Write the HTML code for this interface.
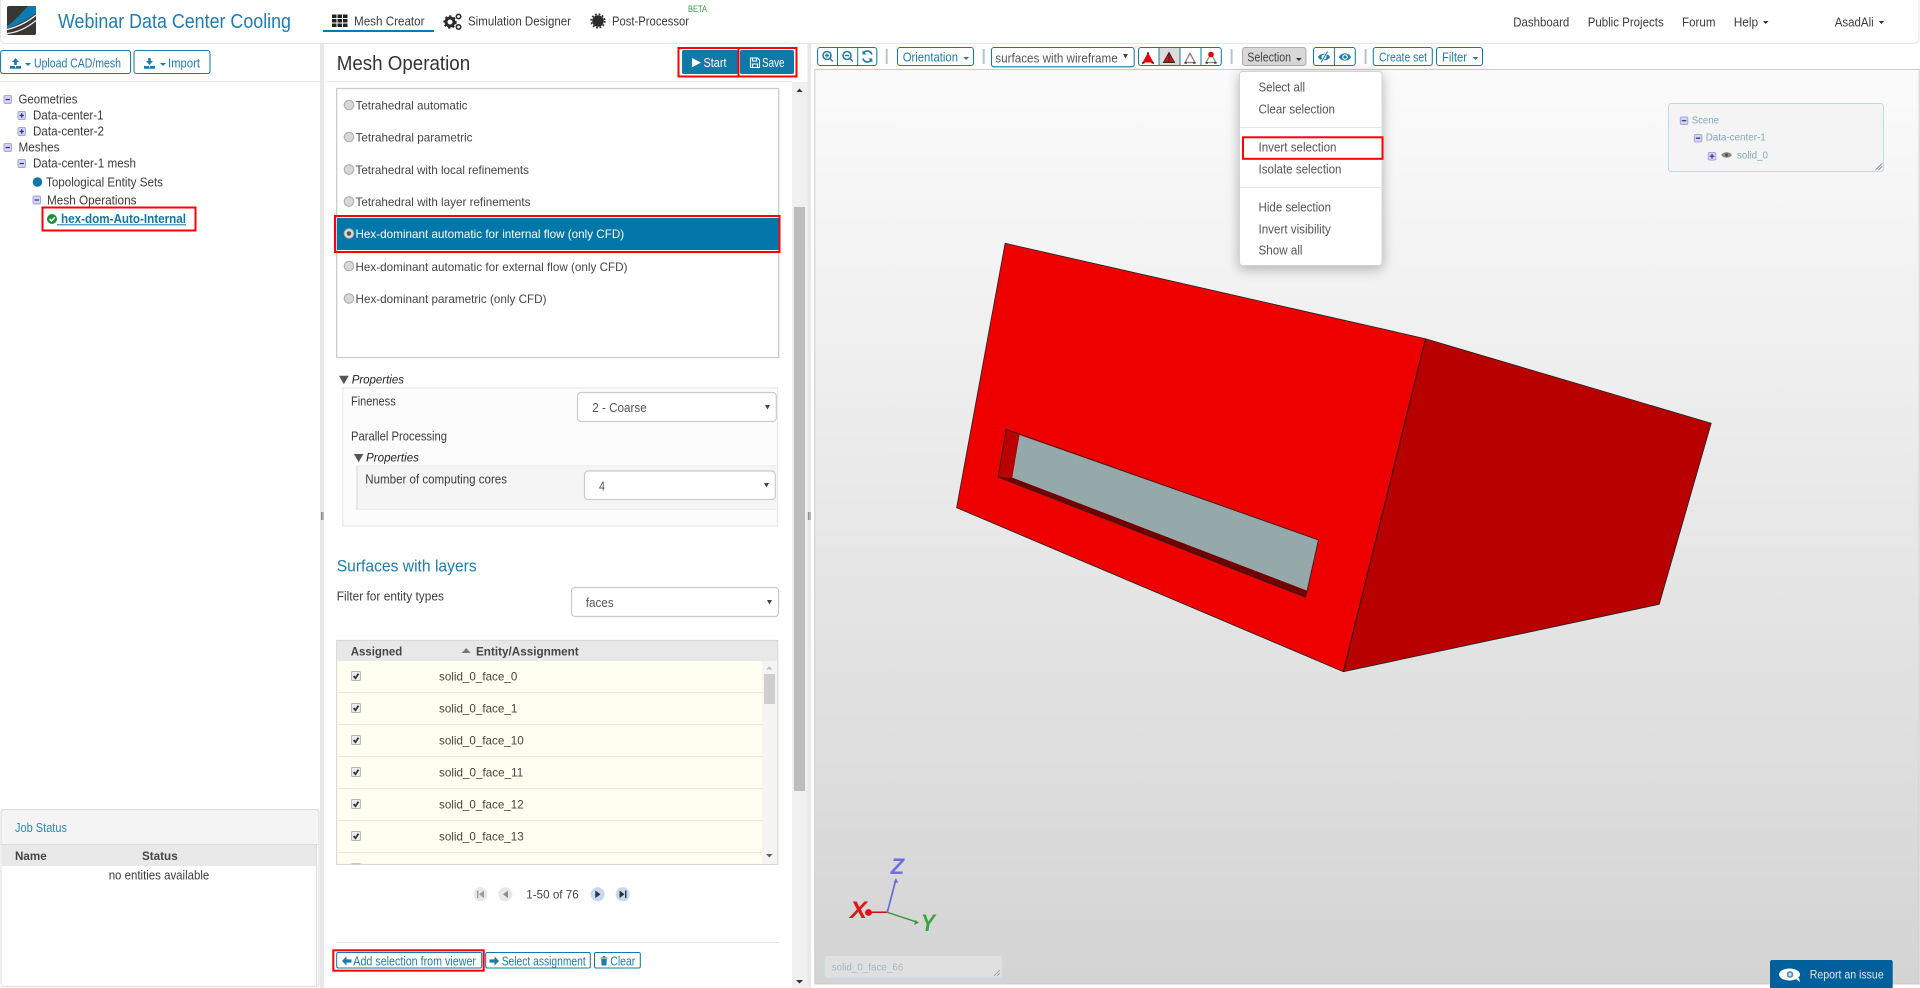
<!DOCTYPE html>
<html lang="en">
<head>
<meta charset="utf-8">
<title>Webinar Data Center Cooling - Mesh Creator</title>
<style>
html,body{margin:0;padding:0;background:#fff;width:1920px;height:988px;overflow:hidden}
svg{display:block}
text{font-family:"Liberation Sans",sans-serif;font-size:13px;fill:#3c3c3c;white-space:pre}
.a{font-size:12px;fill:#444}
.b{font-size:12px;font-weight:bold;fill:#454545}
.lk{fill:#1c7dad}
.m{font-size:12.5px;fill:#555}
.sm{font-size:10px;fill:#7fa9bc}
.btn{fill:#fff;stroke:#1479a8;stroke-width:1.05}
.ln{stroke:#1479a8;stroke-width:1}
.sep{stroke:#b4c4cf;stroke-width:2}
.ib{fill:#1c7dad}
.tb{fill:#d4d4f0;stroke:#a6a6d6;stroke-width:1}
.tm{stroke:#2a2a9a;stroke-width:1.2;fill:none}
.rad{fill:#d8d8d8;stroke:#aaa;stroke-width:1}
.sel{fill:#fff;stroke:#ccc;stroke-width:1.2}
.red{fill:none;stroke:#f00;stroke-width:2}
.ck{fill:#ececec;stroke:#b5b5b5;stroke-width:1}
.cm{fill:none;stroke:#333;stroke-width:1.8}
.rl{stroke:#e6e6e6;stroke-width:1}
</style>
</head>
<body>
<svg xmlns="http://www.w3.org/2000/svg" width="1920" height="988" viewBox="0 0 1920 988">
<defs>
<linearGradient id="vg" x1="0" y1="0" x2="0" y2="1"><stop offset="0" stop-color="#fbfbfb"/><stop offset="1" stop-color="#d4d4d4"/></linearGradient>
</defs>

<!-- header -->
<rect x="0.5" y="-6" width="1918.5" height="49.5" rx="5" fill="#fff" stroke="#e6e6e6"/>
<!-- logo -->
<rect x="7" y="6" width="29" height="29" rx="2" fill="#3a3633"/>
<path d="M36 6H28C22 12 15 21 7 26V28.5C18 25 29 19 36 13Z" fill="#0d7ab0"/>
<path d="M7 29.5C18 27 29 21 36 15" stroke="#fff" stroke-width="1.2" fill="none"/>
<path d="M7 33.5C18 32.5 28 27 36 20.5" stroke="#e8e8e8" stroke-width="1.3" fill="none"/>
<text x="58" y="28" textLength="233" lengthAdjust="spacingAndGlyphs" style="font-size:20.5px;fill:#1f7cb0">Webinar Data Center Cooling</text>

<!-- nav -->
<g fill="#222">
<rect x="332" y="14.5" width="4.5" height="3.5"/><rect x="337.5" y="14.5" width="4.5" height="3.5"/><rect x="343" y="14.5" width="4.5" height="3.5"/>
<rect x="332" y="19" width="4.5" height="3.5"/><rect x="337.5" y="19" width="4.5" height="3.5"/><rect x="343" y="19" width="4.5" height="3.5"/>
<rect x="332" y="23.5" width="4.5" height="3.5"/><rect x="337.5" y="23.5" width="4.5" height="3.5"/><rect x="343" y="23.5" width="4.5" height="3.5"/>
</g>
<text x="354" y="25.5" textLength="70.5" lengthAdjust="spacingAndGlyphs">Mesh Creator</text>
<rect x="323" y="30" width="111" height="2" fill="#1479a8"/>
<circle cx="450" cy="22" r="4" fill="none" stroke="#2b2b2b" stroke-width="3"/>
<circle cx="450" cy="22" r="5.8" fill="none" stroke="#2b2b2b" stroke-width="1.8" stroke-dasharray="2.2 2.2"/>
<circle cx="458.5" cy="16.5" r="2.2" fill="none" stroke="#2b2b2b" stroke-width="1.6"/>
<circle cx="458.5" cy="27" r="2.2" fill="none" stroke="#2b2b2b" stroke-width="1.6"/>
<text x="468" y="25.5" textLength="103" lengthAdjust="spacingAndGlyphs">Simulation Designer</text>
<circle cx="598" cy="21" r="5.8" fill="#2b2b2b"/>
<circle cx="598" cy="21" r="6.8" fill="none" stroke="#2b2b2b" stroke-width="1.6" stroke-dasharray="1.8 1.8"/>
<text x="612" y="25.5" textLength="77" lengthAdjust="spacingAndGlyphs">Post-Processor</text>
<text x="688" y="12" textLength="19" lengthAdjust="spacingAndGlyphs" style="font-size:9px;fill:#3f9d3f">BETA</text>

<text x="1513.3" y="26.5" textLength="56" lengthAdjust="spacingAndGlyphs">Dashboard</text>
<text x="1587.7" y="26.5" textLength="76" lengthAdjust="spacingAndGlyphs">Public Projects</text>
<text x="1682" y="26.5" textLength="33.5" lengthAdjust="spacingAndGlyphs">Forum</text>
<text x="1733.7" y="26.5" textLength="24.5" lengthAdjust="spacingAndGlyphs">Help</text>
<path d="M1763 21h5.5l-2.75 3z" fill="#333"/>
<text x="1834.7" y="26.5" textLength="39" lengthAdjust="spacingAndGlyphs">AsadAli</text>
<path d="M1878.7 21h5.5l-2.75 3z" fill="#333"/>

<!-- left panel -->
<rect x="320" y="44" width="4" height="944" fill="#e8e8e8"/>
<path d="M321.5 512v8M323 512v8" stroke="#666" stroke-width=".8"/>
<rect x="0.6" y="50.5" width="130" height="23" rx="2.5" class="btn"/>
<path d="M15.5 58l-3.5 4h2.2v3h2.6v-3H19zM10 66h5v1.5h1V66h5v2.8H10z" class="ib"/>
<path d="M25 63h6l-3 3z" class="ib"/>
<text x="34" y="67.5" textLength="87" lengthAdjust="spacingAndGlyphs" class="lk">Upload CAD/mesh</text>
<rect x="134" y="50.5" width="76" height="23" rx="2.5" class="btn"/>
<path d="M148.2 58h2.6v3H153l-3.5 4-3.5-4h2.2zM144 66h5v1.5h1V66h5v2.8h-11z" class="ib"/>
<path d="M160 63h6l-3 3z" class="ib"/>
<text x="168" y="67.5" textLength="32" lengthAdjust="spacingAndGlyphs" class="lk">Import</text>
<rect x="0" y="81" width="320" height="1" fill="#e6e6e6"/>

<!-- tree -->
<rect x="4" y="95.5" width="7.5" height="8" rx="1.5" class="tb"/><path d="M5.6 99.5h4.3" class="tm"/>
<text x="18.5" y="103.5" textLength="59" lengthAdjust="spacingAndGlyphs">Geometries</text>
<rect x="18" y="111.5" width="7.5" height="8" rx="1.5" class="tb"/><path d="M19.6 115.5h4.3M21.75 113.3v4.4" class="tm"/>
<text x="33" y="119.5" textLength="70.5" lengthAdjust="spacingAndGlyphs">Data-center-1</text>
<rect x="18" y="127.5" width="7.5" height="8" rx="1.5" class="tb"/><path d="M19.6 131.5h4.3M21.75 129.3v4.4" class="tm"/>
<text x="33" y="135.5" textLength="71" lengthAdjust="spacingAndGlyphs">Data-center-2</text>
<rect x="4" y="143.5" width="7.5" height="8" rx="1.5" class="tb"/><path d="M5.6 147.5h4.3" class="tm"/>
<text x="18.5" y="151.5" textLength="41" lengthAdjust="spacingAndGlyphs">Meshes</text>
<rect x="18" y="159.5" width="7.5" height="8" rx="1.5" class="tb"/><path d="M19.6 163.5h4.3" class="tm"/>
<text x="33" y="167.5" textLength="103" lengthAdjust="spacingAndGlyphs">Data-center-1 mesh</text>
<circle cx="37.5" cy="182" r="4.8" fill="#0f78a8"/>
<text x="46" y="186.5" textLength="117" lengthAdjust="spacingAndGlyphs">Topological Entity Sets</text>
<rect x="33" y="196" width="7.5" height="8" rx="1.5" class="tb"/><path d="M34.6 200h4.3" class="tm"/>
<text x="47" y="204.5" textLength="89.5" lengthAdjust="spacingAndGlyphs">Mesh Operations</text>
<circle cx="52" cy="219" r="5" fill="#1f8f3c"/>
<path d="M49.5 219l2 2 3.2-3.6" stroke="#fff" stroke-width="1.6" fill="none"/>
<text x="61" y="223" textLength="125" lengthAdjust="spacingAndGlyphs" style="font-size:13px;font-weight:bold;fill:#1077a8">hex-dom-Auto-Internal</text>
<rect x="57" y="224.3" width="129" height="1" fill="#1077a8"/>
<rect x="42.5" y="207.5" width="153" height="23" class="red"/>

<!-- job status -->
<rect x="1" y="809.5" width="318" height="177" rx="3" fill="#fff"/>
<path d="M1.5 844V812a3 3 0 0 1 3-3H316a3 3 0 0 1 3 3V844Z" fill="#f4f4f4"/>
<rect x="1" y="809.5" width="318" height="177" rx="3" fill="none" stroke="#ddd"/>
<rect x="1" y="844" width="318" height="1" fill="#ddd"/>
<text x="15" y="832" textLength="52" lengthAdjust="spacingAndGlyphs" style="font-size:12.5px;fill:#2a8abb">Job Status</text>
<rect x="2" y="845" width="314" height="21" fill="#e9e9e9"/>
<rect x="316" y="845" width="1" height="141" fill="#ddd"/>
<text x="15" y="860" textLength="31.7" lengthAdjust="spacingAndGlyphs" class="b">Name</text>
<text x="142" y="860" textLength="35.7" lengthAdjust="spacingAndGlyphs" class="b">Status</text>
<text x="108.7" y="879.5" textLength="100.6" lengthAdjust="spacingAndGlyphs" style="font-size:12.5px">no entities available</text>

<!-- middle panel -->
<text x="336.7" y="70" textLength="133.5" lengthAdjust="spacingAndGlyphs" style="font-size:20.5px;fill:#333">Mesh Operation</text>
<rect x="682" y="50" width="56" height="24" rx="2" fill="#1079a8"/>
<path d="M692 58l9 4.6-9 4.6z" fill="#fff"/>
<text x="703.5" y="67" textLength="23" lengthAdjust="spacingAndGlyphs" style="fill:#fff">Start</text>
<rect x="740" y="50" width="54" height="24" rx="2" fill="#1079a8"/>
<path d="M750.5 58h7l2 2v7.5h-9zM752.5 58v3h4v-3M752.5 67.5v-3.5h5v3.5" fill="none" stroke="#fff" stroke-width="1.1"/>
<text x="762" y="67" textLength="22.5" lengthAdjust="spacingAndGlyphs" style="fill:#fff">Save</text>
<rect x="678.5" y="48" width="60" height="28.5" class="red"/>
<rect x="738.5" y="48" width="58" height="28.5" class="red"/>
<rect x="327" y="81" width="465" height="1" fill="#e6e6e6"/>

<rect x="336.7" y="88.5" width="442" height="269" fill="#fff" stroke="#ccc" stroke-width="1.3"/>
<circle cx="349" cy="105" r="4.8" class="rad"/><text x="355.5" y="109.5" textLength="112" lengthAdjust="spacingAndGlyphs" class="a">Tetrahedral automatic</text>
<circle cx="349" cy="137" r="4.8" class="rad"/><text x="355.5" y="141.5" textLength="117" lengthAdjust="spacingAndGlyphs" class="a">Tetrahedral parametric</text>
<circle cx="349" cy="169.5" r="4.8" class="rad"/><text x="355.5" y="174" textLength="173.5" lengthAdjust="spacingAndGlyphs" class="a">Tetrahedral with local refinements</text>
<circle cx="349" cy="201.5" r="4.8" class="rad"/><text x="355.5" y="206" textLength="175" lengthAdjust="spacingAndGlyphs" class="a">Tetrahedral with layer refinements</text>
<rect x="337" y="218" width="441.5" height="32" fill="#0077a8"/>
<circle cx="349" cy="233.5" r="4.8" fill="#ddd" stroke="#aaa"/><circle cx="349" cy="233.5" r="2.3" fill="#555"/>
<text x="355.5" y="238" textLength="268.7" lengthAdjust="spacingAndGlyphs" class="a" style="fill:#fff">Hex-dominant automatic for internal flow (only CFD)</text>
<rect x="335" y="216" width="444.5" height="36" class="red"/>
<circle cx="349" cy="266" r="4.8" class="rad"/><text x="355.5" y="271" textLength="272" lengthAdjust="spacingAndGlyphs" class="a">Hex-dominant automatic for external flow (only CFD)</text>
<circle cx="349" cy="298.5" r="4.8" class="rad"/><text x="355.5" y="303" textLength="191" lengthAdjust="spacingAndGlyphs" class="a">Hex-dominant parametric (only CFD)</text>

<path d="M339 375.7h9.7l-4.85 8.6z" fill="#555"/>
<text x="351.7" y="383.5" textLength="52.3" lengthAdjust="spacingAndGlyphs" style="font-size:12px;font-style:italic;fill:#222">Properties</text>
<rect x="342.8" y="388" width="434.7" height="138" fill="#fcfcfc" stroke="#eaeaea" stroke-width="1.2"/>
<text x="351" y="405.5" textLength="44.7" lengthAdjust="spacingAndGlyphs">Fineness</text>
<rect x="577.5" y="392.5" width="198.8" height="29" rx="3.5" class="sel"/>
<text x="592.3" y="411.8" textLength="54.4" lengthAdjust="spacingAndGlyphs" class="m">2 - Coarse</text>
<path d="M765 405h5l-2.5 4.5z" fill="#444"/>
<text x="351" y="440.5" textLength="96" lengthAdjust="spacingAndGlyphs">Parallel Processing</text>
<path d="M354 454h9.3l-4.65 8.3z" fill="#555"/>
<text x="366" y="461.5" textLength="53" lengthAdjust="spacingAndGlyphs" style="font-size:12px;font-style:italic;fill:#222">Properties</text>
<rect x="356" y="465.5" width="420.7" height="44" fill="#f5f5f5"/>
<rect x="356" y="465.5" width="2" height="44" fill="#e6e6e6"/>
<rect x="356" y="465.3" width="420.7" height="1" fill="#ececec"/>
<rect x="356" y="509" width="420.7" height="1" fill="#ececec"/>
<text x="365.3" y="483.5" textLength="141.7" lengthAdjust="spacingAndGlyphs">Number of computing cores</text>
<rect x="584.5" y="471" width="190.8" height="28.5" rx="3.5" class="sel"/>
<text x="599" y="490.5" textLength="6" lengthAdjust="spacingAndGlyphs" class="m">4</text>
<path d="M764 483h5l-2.5 4.5z" fill="#444"/>

<text x="336.7" y="571.5" textLength="140" lengthAdjust="spacingAndGlyphs" style="font-size:16.5px;fill:#1c7dad">Surfaces with layers</text>
<text x="336.7" y="600.5" textLength="107.3" lengthAdjust="spacingAndGlyphs">Filter for entity types</text>
<rect x="571.5" y="587.5" width="207" height="29" rx="3.5" class="sel"/>
<text x="585.7" y="606.8" textLength="28" lengthAdjust="spacingAndGlyphs" class="m">faces</text>
<path d="M767 600h5l-2.5 4.5z" fill="#444"/>

<!-- table -->
<rect x="336.7" y="640.5" width="441" height="224" fill="#fffff0" stroke="#d8d8d8" stroke-width="1.2"/>
<rect x="337.3" y="641" width="440" height="20" fill="#e8e8e8"/>
<text x="350.7" y="655.5" textLength="51.6" lengthAdjust="spacingAndGlyphs" class="b">Assigned</text>
<path d="M461.7 653l4.5-5 4.5 5z" fill="#777"/>
<text x="476" y="655.5" textLength="102.7" lengthAdjust="spacingAndGlyphs" class="b">Entity/Assignment</text>
<rect x="762" y="661" width="15" height="203" fill="#f4f4f2"/>
<path d="M766 669.5l3.3-3.5 3.3 3.5z" fill="#c4c4c4"/>
<rect x="764" y="674" width="11" height="30" fill="#cfcfcb"/>
<path d="M766 854h6.6l-3.3 3.5z" fill="#666"/>
<path class="rl" d="M337.3 692.5H762M337.3 724.5H762M337.3 756.5H762M337.3 788.5H762M337.3 820.5H762M337.3 852.5H762"/>
<g>
<rect x="351.5" y="671.5" width="9" height="9" rx="1.5" class="ck"/><path d="M353.5 676l2 2.2 3-4.6" class="cm"/>
<text x="439" y="680.5" textLength="78.3" lengthAdjust="spacingAndGlyphs" style="font-size:12px;fill:#444">solid_0_face_0</text>
<rect x="351.5" y="703.5" width="9" height="9" rx="1.5" class="ck"/><path d="M353.5 708l2 2.2 3-4.6" class="cm"/>
<text x="439" y="712.5" textLength="78.3" lengthAdjust="spacingAndGlyphs" style="font-size:12px;fill:#444">solid_0_face_1</text>
<rect x="351.5" y="735.5" width="9" height="9" rx="1.5" class="ck"/><path d="M353.5 740l2 2.2 3-4.6" class="cm"/>
<text x="439" y="744.5" textLength="84.7" lengthAdjust="spacingAndGlyphs" style="font-size:12px;fill:#444">solid_0_face_10</text>
<rect x="351.5" y="767.5" width="9" height="9" rx="1.5" class="ck"/><path d="M353.5 772l2 2.2 3-4.6" class="cm"/>
<text x="439" y="776.5" textLength="84.3" lengthAdjust="spacingAndGlyphs" style="font-size:12px;fill:#444">solid_0_face_11</text>
<rect x="351.5" y="799.5" width="9" height="9" rx="1.5" class="ck"/><path d="M353.5 804l2 2.2 3-4.6" class="cm"/>
<text x="439" y="808.5" textLength="84.7" lengthAdjust="spacingAndGlyphs" style="font-size:12px;fill:#444">solid_0_face_12</text>
<rect x="351.5" y="831.5" width="9" height="9" rx="1.5" class="ck"/><path d="M353.5 836l2 2.2 3-4.6" class="cm"/>
<text x="439" y="840.5" textLength="84.7" lengthAdjust="spacingAndGlyphs" style="font-size:12px;fill:#444">solid_0_face_13</text>
<rect x="351.5" y="863" width="9" height="1.4" fill="#c4c4c4"/>
</g>

<!-- pager -->
<circle cx="480.3" cy="894.3" r="7" fill="#e8e8e8"/><path d="M477 890.5h1.4v7.6H477zM484 890.5v7.6l-5-3.8z" fill="#9c9c9c"/>
<circle cx="505.3" cy="894.3" r="7" fill="#e8e8e8"/><path d="M508 890.5v7.6l-5-3.8z" fill="#8c8c8c"/>
<text x="526.3" y="898.7" textLength="52.4" lengthAdjust="spacingAndGlyphs" class="a">1-50 of 76</text>
<circle cx="597.7" cy="894.3" r="7" fill="#c6d9f1"/><path d="M595.3 890.5v7.6l5.2-3.8z" fill="#333"/>
<circle cx="622.7" cy="894.3" r="7" fill="#c6d9f1"/><path d="M619.5 890.5v7.6l5-3.8zM625 890.5h1.4v7.6H625z" fill="#333"/>

<rect x="336" y="942" width="443" height="1" fill="#e6e6e6"/>
<rect x="336.7" y="952.5" width="145" height="15.5" rx="1.5" class="btn"/>
<path d="M342 961l4.5-4.6v3h5v3.2h-5v3z" class="ib"/>
<text x="353.3" y="965.5" textLength="122.7" lengthAdjust="spacingAndGlyphs" style="font-size:13px;fill:#1c7dad">Add selection from viewer</text>
<rect x="333.3" y="950.3" width="150.4" height="20.4" class="red"/>
<rect x="485.7" y="952.5" width="104.6" height="15.5" rx="1.5" class="btn"/>
<path d="M499 961l-4.5-4.6v3h-5v3.2h5v3z" class="ib"/>
<text x="501.7" y="965.5" textLength="84" lengthAdjust="spacingAndGlyphs" class="lk">Select assignment</text>
<rect x="594.5" y="952.5" width="45.8" height="15.5" rx="1.5" class="btn"/>
<path d="M600.5 957.5h7v1h-7zM601.2 959h5.6l-.4 6.5h-4.8zM602.8 956h2.4v1.2h-2.4z" class="ib"/>
<text x="610.3" y="965.5" textLength="25" lengthAdjust="spacingAndGlyphs" class="lk">Clear</text>

<!-- main scrollbar -->
<rect x="792" y="82" width="16" height="906" fill="#f0f0f0"/>
<rect x="794" y="207" width="11" height="584" fill="#bdbdbd"/>
<path d="M796.5 92l3-3.5 3 3.5z" fill="#333"/>
<path d="M796 980h7l-3.5 3.5z" fill="#333"/>
<rect x="807.5" y="44" width="3.5" height="944" fill="#e8e8e8"/>
<path d="M808.3 512v8M810 512v8" stroke="#666" stroke-width=".8"/>

<!-- toolbar -->
<rect x="817.6" y="47.5" width="59.2" height="18" rx="2.5" class="btn"/>
<path d="M837.5 47.5v18M857.7 47.5v18" class="ln"/>
<circle cx="827" cy="55.5" r="4" fill="none" stroke="#1c7dad" stroke-width="1.6"/><path d="M825 55.5h4M827 53.5v4M830 58.5l2.8 3" stroke="#1c7dad" stroke-width="1.4" fill="none"/>
<circle cx="847" cy="55.5" r="4" fill="none" stroke="#1c7dad" stroke-width="1.6"/><path d="M845 55.5h4M850 58.5l2.8 3" stroke="#1c7dad" stroke-width="1.4" fill="none"/>
<path d="M871.8 54.5a4.6 4.6 0 0 0-8.2-1.5M863 58.5a4.6 4.6 0 0 0 8.2 1.5" stroke="#1c7dad" stroke-width="1.7" fill="none"/><path d="M862.5 50.5v4h4zM872.3 62.5v-4h-4z" class="ib"/>
<path d="M886.7 49v15" class="sep"/>
<rect x="897.5" y="47.5" width="76" height="18" rx="2.5" class="btn"/>
<text x="902.7" y="61.7" textLength="55.3" lengthAdjust="spacingAndGlyphs" class="lk">Orientation</text>
<path d="M963.3 57h5.7l-2.85 3z" class="ib"/>
<path d="M983.7 49v15" class="sep"/>
<rect x="991.5" y="47.5" width="142.7" height="19.3" rx="2.5" class="btn"/>
<text x="995.3" y="62.3" textLength="122.4" lengthAdjust="spacingAndGlyphs" style="fill:#555">surfaces with wireframe</text>
<path d="M1123 54h5l-2.5 4.5z" fill="#444"/>
<rect x="1159" y="48" width="21" height="17.5" fill="#dcdcdc"/>
<rect x="1138.5" y="47.5" width="82.8" height="18" rx="2.5" fill="none" stroke="#1479a8" stroke-width="1.05"/>
<path d="M1159 47.5v18M1180 47.5v18M1201 47.5v18" class="ln"/>
<!-- solid -->
<path d="M1148 52.5l5.5 10h-11z" fill="#ea0000"/>
<path d="M1142 63h2.5M1151.5 63h2.5M1147 53h2" stroke="#111" stroke-width="1.2"/>
<!-- surfaces + wireframe -->
<path d="M1169 52.5l5.5 10h-11z" fill="#e01010"/>
<path d="M1169 52.5l-5.5 10h11zM1169 52.5v10" fill="none" stroke="#2a2a2a" stroke-width="1"/>
<!-- wireframe -->
<path d="M1190 53.5l5 9h-10z" fill="#fff" stroke="#9a8a8a" stroke-width="1.4"/>
<path d="M1188.5 55.5l1.5-2 1.5 2" fill="none" stroke="#d86a6a" stroke-width="1.2"/>
<path d="M1184.5 63h2.5M1193 63h2.5" stroke="#222" stroke-width="1.3"/>
<!-- selected top -->
<path d="M1211 54l5 8.5h-10z" fill="#fff" stroke="#888" stroke-width="1.2"/>
<circle cx="1211" cy="54.5" r="2.8" fill="#e80000"/>
<path d="M1205.5 63h2.5M1214 63h2.5" stroke="#222" stroke-width="1.2"/>
<path d="M1231.6 49v15" class="sep"/>
<rect x="1242.5" y="47.5" width="63.5" height="18" rx="2.5" fill="#d8d8d8" stroke="#adadad"/>
<text x="1247.4" y="61.7" textLength="43.6" lengthAdjust="spacingAndGlyphs" style="fill:#444">Selection</text>
<path d="M1296 58h5.7l-2.85 3z" fill="#333"/>
<rect x="1313.5" y="47.5" width="41.8" height="18" rx="2.5" class="btn"/>
<path d="M1334.4 47.5v18" class="ln"/>
<path d="M1318 57c2.2-4.4 9.8-4.4 12 0-2.2 4.4-9.8 4.4-12 0z" class="ib"/><circle cx="1324" cy="57" r="2.4" fill="#fff"/><circle cx="1324" cy="57" r="1.1" class="ib"/>
<path d="M1321 62.5l6.5-11" stroke="#fff" stroke-width="2.2"/><path d="M1321 62.5l6.5-11" stroke="#1c7dad" stroke-width="1"/>
<path d="M1339 57c2.3-4.8 9.7-4.8 12 0-2.3 4.8-9.7 4.8-12 0z" class="ib"/><circle cx="1345" cy="57" r="2.8" fill="#fff"/><circle cx="1345" cy="57" r="1.6" class="ib"/>
<path d="M1365.6 49v15" class="sep"/>
<rect x="1373.3" y="47.5" width="59" height="18" rx="2.5" class="btn"/>
<text x="1379" y="61.7" textLength="48" lengthAdjust="spacingAndGlyphs" class="lk">Create set</text>
<rect x="1436.5" y="47.5" width="46" height="18" rx="2.5" class="btn"/>
<text x="1442" y="61.7" textLength="25" lengthAdjust="spacingAndGlyphs" class="lk">Filter</text>
<path d="M1472.7 57h5.7l-2.85 3z" class="ib"/>

<!-- viewer -->
<rect x="814.8" y="69.5" width="1104.4" height="914.5" fill="url(#vg)" stroke="#ccc" stroke-width="1"/>

<!-- model -->
<path d="M1005.1 243.3L1425.5 338.7 1343.4 671.7 956.6 507.7Z" fill="#ee0000"/>
<path d="M1425.5 338.7L1711.2 423.3 1659.2 604.3 1343.4 671.7Z" fill="#b80000"/>
<path d="M1005.1 243.3L1425.5 338.7 1711.2 423.3 1659.2 604.3 1343.4 671.7 956.6 507.7Z" fill="none" stroke="#222" stroke-width=".8"/>
<path d="M1425.5 338.7L1343.4 671.7" stroke="#111" stroke-width=".9"/>
<path d="M1019.4 435L1318.4 540 1307.1 590.7 1012.2 477.7Z" fill="#95a9aa"/>
<path d="M1006.1 429.3L1019.4 435 1012.2 477.7 998 477Z" fill="#b80000"/>
<path d="M998 477L1012.2 477.7 1307.1 590.7 1305.6 597.3Z" fill="#700000"/>
<path d="M1006.1 429.3L1318.4 540 1305.6 597.3 998 477Z" fill="none" stroke="#222" stroke-width=".8"/>

<!-- axes -->
<path d="M887.3 912.3H868.3" stroke="#cc1111" stroke-width="1.5"/><circle cx="868.5" cy="912.5" r="3.4" fill="#dd1111"/>
<path d="M887.3 912.3L895.5 881" stroke="#6a6ad8" stroke-width="1.7"/><path d="M896 878l2.2 5-4.4-1z" fill="#6a6ad8"/>
<path d="M887.3 912.3L916 921.8" stroke="#3f943f" stroke-width="1.5"/><path d="M919 922.8l-5 2 1.4-4.8z" fill="#3f943f"/>
<text x="850" y="918" textLength="17" lengthAdjust="spacingAndGlyphs" style="font-size:24px;font-style:italic;font-weight:bold;fill:#dd1a1a">X</text>
<text x="890.7" y="874" textLength="13.5" lengthAdjust="spacingAndGlyphs" style="font-size:22px;font-style:italic;font-weight:bold;fill:#6f6fe0">Z</text>
<text x="921" y="931" textLength="14" lengthAdjust="spacingAndGlyphs" style="font-size:24px;font-style:italic;font-weight:bold;fill:#3aa53a">Y</text>

<!-- label box -->
<rect x="824.5" y="955.5" width="177.8" height="22.5" rx="3" fill="#e0e0e0" stroke="#c8dce4"/>
<text x="831.7" y="970.5" textLength="71.6" lengthAdjust="spacingAndGlyphs" class="sm" style="fill:#a9b8bf">solid_0_face_66</text>
<path d="M994 976l6-6M997 976l3-3" stroke="#999" stroke-width=".8"/>

<!-- scene tree box -->
<rect x="1668.5" y="103.5" width="215" height="68" rx="3" fill="#f4f4f4" stroke="#b9dce7"/>
<rect x="1680.3" y="117" width="7.5" height="7.5" rx="1.5" class="tb"/><path d="M1681.8 120.7h4.5" class="tm"/>
<text x="1691.7" y="123.5" textLength="27.3" lengthAdjust="spacingAndGlyphs" class="sm">Scene</text>
<rect x="1694.3" y="134.5" width="7.5" height="7.5" rx="1.5" class="tb"/><path d="M1695.8 138.2h4.5" class="tm"/>
<text x="1705.7" y="140.5" textLength="60" lengthAdjust="spacingAndGlyphs" class="sm">Data-center-1</text>
<rect x="1708.3" y="152.5" width="7.5" height="7.5" rx="1.5" class="tb"/><path d="M1709.8 156.2h4.5M1712 154v4.5" class="tm"/>
<path d="M1721.3 155c2-3.6 8.6-3.6 10.7 0-2.1 3.6-8.7 3.6-10.7 0z" fill="#8a8a8a"/><circle cx="1726.6" cy="155" r="1.6" fill="#555"/>
<text x="1737" y="158.5" textLength="31" lengthAdjust="spacingAndGlyphs" class="sm">solid_0</text>
<path d="M1875.5 170l6.5-6.5M1878.5 170l3.5-3.5" stroke="#777" stroke-width=".8"/>

<!-- dropdown -->
<rect x="1239.5" y="71.5" width="142.5" height="194" rx="3" fill="#fff" stroke="#d4d4d4" style="filter:drop-shadow(0 3px 6px rgba(0,0,0,.28))"/>
<text x="1258.5" y="91.5" textLength="46.5" lengthAdjust="spacingAndGlyphs" style="fill:#555">Select all</text>
<text x="1258.5" y="113.5" textLength="76.5" lengthAdjust="spacingAndGlyphs" style="fill:#555">Clear selection</text>
<rect x="1240" y="127" width="142" height="1" fill="#e6e6e6"/>
<text x="1258.5" y="151.5" textLength="78" lengthAdjust="spacingAndGlyphs" style="fill:#555">Invert selection</text>
<rect x="1243" y="137.3" width="139.5" height="21.5" class="red"/>
<text x="1258.5" y="173.5" textLength="83" lengthAdjust="spacingAndGlyphs" style="fill:#555">Isolate selection</text>
<rect x="1240" y="187" width="142" height="1" fill="#e6e6e6"/>
<text x="1258.5" y="211.5" textLength="72.5" lengthAdjust="spacingAndGlyphs" style="fill:#555">Hide selection</text>
<text x="1258.5" y="233.5" textLength="72.3" lengthAdjust="spacingAndGlyphs" style="fill:#555">Invert visibility</text>
<text x="1258.5" y="254.5" textLength="44" lengthAdjust="spacingAndGlyphs" style="fill:#555">Show all</text>

<!-- report an issue -->
<path d="M1770 988V962a2 2 0 0 1 2-2h118.7a2 2 0 0 1 2 2V988Z" fill="#00609c"/>
<ellipse cx="1789.5" cy="974.5" rx="10.5" ry="6" fill="#fff"/>
<path d="M1796 979l4 3-1-4z" fill="#fff"/>
<circle cx="1790" cy="974.5" r="3.4" fill="#5b8fb4"/><circle cx="1790" cy="974.5" r="1.6" fill="#cfe0ec"/>
<text x="1809.7" y="978.5" textLength="74" lengthAdjust="spacingAndGlyphs" style="font-size:12px;fill:#dfe9f1">Report an issue</text>
</svg>
</body>
</html>
